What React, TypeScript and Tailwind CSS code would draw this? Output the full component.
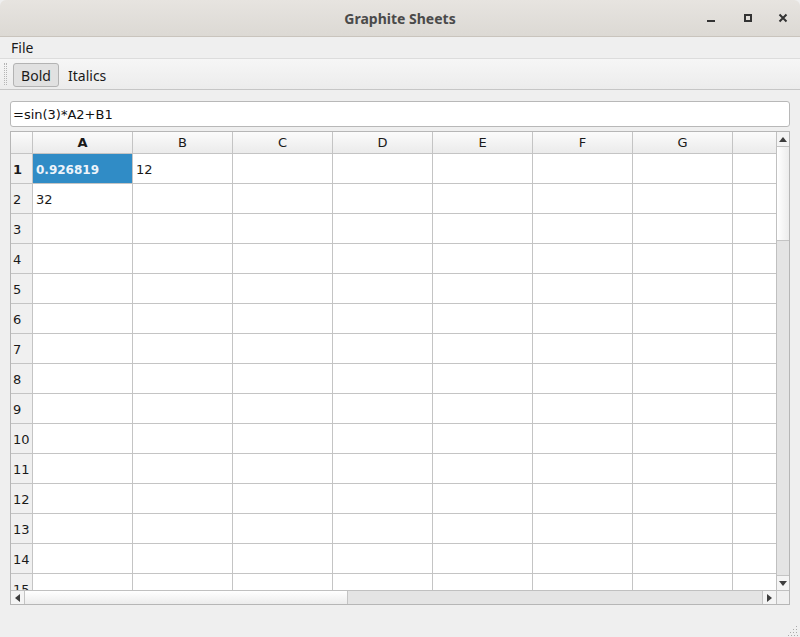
import React from "react";

const COLS = ["A", "B", "C", "D", "E", "F", "G", ""];
const ROWS = Array.from({ length: 15 }, (_, i) => i + 1);

function cellText(r: number, c: number): string {
  if (r === 1 && c === 0) return "0.926819";
  if (r === 1 && c === 1) return "12";
  if (r === 2 && c === 0) return "32";
  return "";
}

export default function App() {
  return (
    <div
      className="w-[800px] h-[637px] bg-[#efefef] flex flex-col overflow-hidden relative"
      style={{ fontFamily: "'DejaVu Sans', sans-serif" }}
    >
      {/* Title bar */}
      <div className="h-[37px] shrink-0 bg-gradient-to-b from-[#e7e4e0] to-[#dcd9d4] border-b border-[#c9c4bd] rounded-t-[6px] flex items-center relative">
        <div
          className="flex-1 text-center text-[14px] font-bold text-[#4a4a4a]"
          style={{ fontFamily: "'Noto Sans', sans-serif" }}
        >
          Graphite Sheets
        </div>
        <div className="absolute right-0 top-0 h-[36px] flex items-center">
          <div className="w-[37px] h-[36px] flex items-center justify-center">
            <div className="w-[8px] h-[2px] bg-[#333] mt-[5px]" />
          </div>
          <div className="w-[37px] h-[36px] flex items-center justify-center">
            <div className="w-[8px] h-[8px] border-2 border-[#333]" />
          </div>
          <div className="w-[34px] h-[36px] flex items-center justify-center">
            <svg width="10" height="10" viewBox="0 0 10 10">
              <path d="M1.5 1.5 L8.5 8.5 M8.5 1.5 L1.5 8.5" stroke="#333" strokeWidth="2" />
            </svg>
          </div>
        </div>
      </div>

      {/* Menu bar */}
      <div
        className="h-[21px] shrink-0 bg-[#efefef] flex items-center pl-[11px] text-[14px] text-[#1a1a1a]"
        style={{ fontFamily: "'Noto Sans', sans-serif" }}
      >
        File
      </div>

      {/* Toolbar */}
      <div
        className="h-[32px] shrink-0 border-t border-[#dcdcdc] border-b border-b-[#c6c6c6] bg-gradient-to-b from-[#f6f6f6] to-[#ececec] flex items-center text-[14px] text-[#1a1a1a]"
        style={{ fontFamily: "'Noto Sans', sans-serif" }}
      >
        <div className="ml-[4px] w-[4px] h-[22px] flex gap-[1px]">
          <div className="w-[1px] h-full border-l border-dotted border-[#b5b5b5]" />
          <div className="w-[1px] h-full border-l border-dotted border-[#b5b5b5]" />
        </div>
        <div className="ml-[5px] mt-[1px] w-[46px] h-[24px] rounded-[3px] border border-[#b3b3b3] bg-[#e1e1e1] flex items-center justify-center pt-[1px]">
          Bold
        </div>
        <div className="ml-[9px] pt-[2px]">Italics</div>
      </div>

      {/* Content */}
      <div className="flex flex-col pl-[10px] pt-[11px]">
        <div className="w-[780px] h-[26px] bg-white border border-[#b8b8b8] rounded-[3px] flex items-center pl-[2px] pt-[1px] text-[13px] text-[#111]">
          =sin(3)*A2+B1
        </div>

        {/* Table */}
        <div className="mt-[4px] w-[780px] h-[474px] border border-[#b6b6b6] bg-white flex flex-col">
          <div className="flex h-[458px]">
            {/* grid */}
            <div className="w-[765px] h-[458px] overflow-hidden flex flex-col">
              {/* header row */}
              <div className="flex shrink-0 h-[22px]">
                <div className="w-[22px] shrink-0 h-[22px] border-r border-b border-[#c4c4c4] bg-gradient-to-b from-[#fbfbfb] to-[#ebebeb]" />
                {COLS.map((c, i) => (
                  <div
                    key={i}
                    className={
                      "w-[100px] shrink-0 h-[22px] border-r border-b border-[#c4c4c4] bg-gradient-to-b from-[#fbfbfb] to-[#ebebeb] flex items-center justify-center pt-[1px] text-[13px] text-[#1a1a1a] " +
                      (i === 0 ? "font-bold" : "")
                    }
                  >
                    {c}
                  </div>
                ))}
              </div>
              {ROWS.map((r) => (
                <div key={r} className="flex shrink-0 h-[30px]">
                  <div
                    className={
                      "w-[22px] shrink-0 h-[30px] border-r border-b border-[#c4c4c4] bg-[#f0f0f0] flex items-center pl-[2px] pt-[2px] text-[13px] text-[#1a1a1a] " +
                      (r === 1 ? "font-bold" : "")
                    }
                  >
                    {r}
                  </div>
                  {COLS.map((_, c) => {
                    const sel = r === 1 && c === 0;
                    return (
                      <div
                        key={c}
                        className={
                          "w-[100px] shrink-0 h-[30px] border-r border-b border-[#c4c4c4] flex items-center pl-[3px] pt-[2px] " +
                          (sel
                            ? "bg-[#308cc6] text-[#eef4fa] font-bold text-[12px]"
                            : "text-[#1a1a1a] text-[13px]")
                        }
                      >
                        {cellText(r, c)}
                      </div>
                    );
                  })}
                </div>
              ))}
            </div>
            {/* vertical scrollbar */}
            <div className="w-[13px] h-[458px] border-l border-[#c0c0c0] flex flex-col bg-[#e4e4e4]">
              <div className="h-[15px] shrink-0 bg-[#f4f4f4] border-b border-[#c4c4c4] flex items-center justify-center">
                <svg width="8" height="5" viewBox="0 0 8 5">
                  <path d="M0 5 L4 0 L8 5 Z" fill="#3d3d3d" />
                </svg>
              </div>
              <div className="h-[94px] shrink-0 bg-gradient-to-r from-[#ffffff] to-[#ececec] border-b border-[#c4c4c4]" />
              <div className="flex-1" />
              <div className="h-[15px] shrink-0 bg-[#f4f4f4] border-t border-[#c4c4c4] flex items-center justify-center">
                <svg width="8" height="5" viewBox="0 0 8 5">
                  <path d="M0 0 L8 0 L4 5 Z" fill="#3d3d3d" />
                </svg>
              </div>
            </div>
          </div>
          {/* horizontal scrollbar */}
          <div className="flex h-[14px] border-t border-[#c0c0c0]">
            <div className="w-[765px] h-[13px] flex bg-[#e4e4e4]">
              <div className="w-[14px] shrink-0 bg-[#f4f4f4] border-r border-[#c4c4c4] flex items-center justify-center">
                <svg width="5" height="8" viewBox="0 0 5 8">
                  <path d="M5 0 L5 8 L0 4 Z" fill="#3d3d3d" />
                </svg>
              </div>
              <div className="w-[323px] shrink-0 bg-gradient-to-b from-[#ffffff] to-[#ececec] border-r border-[#c4c4c4]" />
              <div className="flex-1" />
              <div className="w-[14px] shrink-0 bg-[#f4f4f4] border-l border-[#c4c4c4] flex items-center justify-center">
                <svg width="5" height="8" viewBox="0 0 5 8">
                  <path d="M0 0 L5 4 L0 8 Z" fill="#3d3d3d" />
                </svg>
              </div>
            </div>
            <div className="w-[13px] h-[13px] border-l border-[#c0c0c0] bg-[#efefef]" />
          </div>
        </div>
      </div>

      {/* resize grip */}
      <svg className="absolute right-[2px] bottom-[1px]" width="10" height="10" viewBox="0 0 10 10">
        <rect x="8" y="0" width="1" height="1" fill="#aaa" />
        <rect x="5" y="3" width="1" height="1" fill="#aaa" />
        <rect x="8" y="3" width="1" height="1" fill="#aaa" />
        <rect x="2" y="6" width="1" height="1" fill="#aaa" />
        <rect x="5" y="6" width="1" height="1" fill="#aaa" />
        <rect x="8" y="6" width="1" height="1" fill="#aaa" />
        <rect x="0" y="9" width="1" height="1" fill="#aaa" />
        <rect x="3" y="9" width="1" height="1" fill="#aaa" />
        <rect x="6" y="9" width="1" height="1" fill="#aaa" />
        <rect x="9" y="9" width="1" height="1" fill="#aaa" />
      </svg>
    </div>
  );
}
